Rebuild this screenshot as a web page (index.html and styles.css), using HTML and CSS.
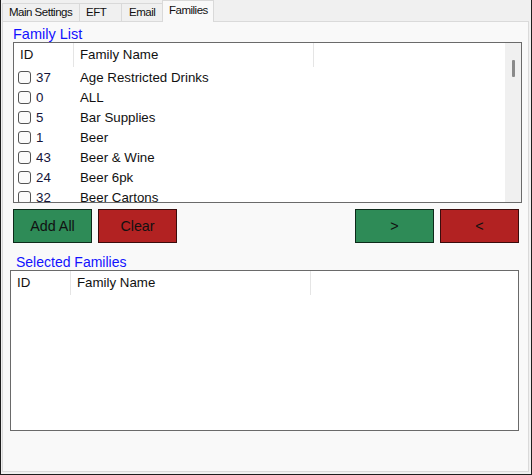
FILE: index.html
```html
<!DOCTYPE html>
<html lang="en">
<head>
  <meta charset="UTF-8">
  <title>Families</title>
  <link rel="stylesheet" href="styles.css">
</head>
<body>
  <div class="window">
    <div class="tabs">
      <div class="tab tab-main">Main Settings</div>
      <div class="tab tab-eft">EFT</div>
      <div class="tab tab-email">Email</div>
      <div class="tab tab-families active">Families</div>
    </div>

    <div class="page">
      <div class="group-label family-label">Family List</div>
      <div class="listbox family-list">
        <div class="list-body">
          <div class="list-header">
            <div class="col col-id">ID</div>
            <div class="col col-name">Family Name</div>
          </div>
          <div class="row"><div class="cell-id"><span class="check"></span>37</div><div class="cell-name">Age Restricted Drinks</div></div>
          <div class="row"><div class="cell-id"><span class="check"></span>0</div><div class="cell-name">ALL</div></div>
          <div class="row"><div class="cell-id"><span class="check"></span>5</div><div class="cell-name">Bar Supplies</div></div>
          <div class="row"><div class="cell-id"><span class="check"></span>1</div><div class="cell-name">Beer</div></div>
          <div class="row"><div class="cell-id"><span class="check"></span>43</div><div class="cell-name">Beer &amp; Wine</div></div>
          <div class="row"><div class="cell-id"><span class="check"></span>24</div><div class="cell-name">Beer 6pk</div></div>
          <div class="row"><div class="cell-id"><span class="check"></span>32</div><div class="cell-name">Beer Cartons</div></div>
        </div>
        <div class="scrollbar"><div class="thumb"></div></div>
      </div>

      <div class="button-row">
        <button class="btn btn-green">Add All</button>
        <button class="btn btn-red">Clear</button>
        <button class="btn btn-green btn-push">&gt;</button>
        <button class="btn btn-red">&lt;</button>
      </div>

      <div class="group-label selected-label">Selected Families</div>
      <div class="listbox selected-list">
        <div class="list-body">
          <div class="list-header">
            <div class="col col-id">ID</div>
            <div class="col col-name">Family Name</div>
          </div>
        </div>
      </div>
    </div>
  </div>
</body>
</html>
```

FILE: styles.css
```css
body {
  margin: 0;
  font-family: "Liberation Sans", Arial, sans-serif;
  background-color: #f0f0f0;
  color: #111;
}
.window {
  width: 532px;
  height: 475px;
  box-sizing: border-box;
  border: 1px solid #1e1e1e;
  border-top: none;
  background-color: #f0f0f0;
  display: flex;
  flex-direction: column;
}

/* tab strip */
.tabs {
  display: flex;
  align-items: flex-end;
  height: 21px;
  padding-left: 1px;
}
.tab {
  box-sizing: border-box;
  height: 18px;
  line-height: 17px;
  font-size: 11.5px;
  letter-spacing: -0.5px;
  border: 1px solid #d9d9d9;
  border-bottom: none;
  margin-right: -1px;
  background-color: #f0f0f0;
  white-space: nowrap;
}
.tab-main { width: 78px; padding-left: 6px; }
.tab-eft { width: 43px; padding-left: 6px; }
.tab-email { width: 42px; padding-left: 7px; }
.tab-families {
  width: 52px;
  padding-left: 6px;
}
.tab.active {
  height: 22px;
  line-height: 18px;
  margin-bottom: -1px;
  background-color: #f9f9f9;
  position: relative;
  z-index: 1;
}

/* tab page */
.page {
  flex: 1;
  margin: 0 2px 2px 1px;
  border: 1px solid #dadada;
  background-color: #f9f9f9;
  display: flex;
  flex-direction: column;
}
.group-label {
  font-size: 14.5px;
  line-height: 16px;
  color: #1212ff;
}
.family-label {
  margin: 4px 0 0 10px;
}
.selected-label {
  margin: 11px 0 0 13px;
  font-size: 14px;
}

/* list views */
.listbox {
  box-sizing: border-box;
  width: 509px;
  height: 161px;
  border: 1px solid #6a6a6a;
  background-color: white;
  display: flex;
  font-size: 13.3px;
}
.family-list {
  margin-left: 10px;
}
.selected-list {
  margin-left: 7px;
}
.list-body {
  flex: 1;
  overflow: hidden;
}
.list-header {
  display: flex;
  height: 24px;
  line-height: 24px;
}
.col {
  box-sizing: border-box;
  padding-left: 6px;
  border-right: 1px solid #e5e5e5;
}
.col-id { width: 60px; }
.col-name { width: 240px; }
.row {
  display: flex;
  align-items: center;
  height: 20px;
}
.cell-id {
  width: 60px;
  display: flex;
  align-items: center;
  padding-left: 4px;
  box-sizing: border-box;
  color: #14143a;
}
.cell-name {
  padding-left: 6px;
}
.check {
  box-sizing: border-box;
  width: 13px;
  height: 13px;
  border: 1px solid #555;
  border-radius: 3px;
  background-color: #fbfbfb;
  margin-right: 5px;
}
.scrollbar {
  width: 16px;
  background-color: #f0f0f0;
}
.thumb {
  width: 3px;
  height: 17px;
  margin: 17px 0 0 7px;
  border-radius: 1px;
  background-color: #8a8a8a;
}

/* buttons */
.button-row {
  display: flex;
  gap: 6px;
  margin-top: 6px;
  padding: 0 9px 0 10px;
}
.btn {
  box-sizing: border-box;
  width: 79px;
  height: 34px;
  font-family: "Liberation Sans", Arial, sans-serif;
  font-size: 14.3px;
  color: #111;
  padding: 0;
  cursor: pointer;
}
.btn-green {
  background-color: #2e8b57;
  border: 1px solid #0d2a1a;
}
.btn-red {
  background-color: #b22222;
  border: 1px solid #3a0c0c;
}
.btn-push {
  margin-left: auto;
}
```
